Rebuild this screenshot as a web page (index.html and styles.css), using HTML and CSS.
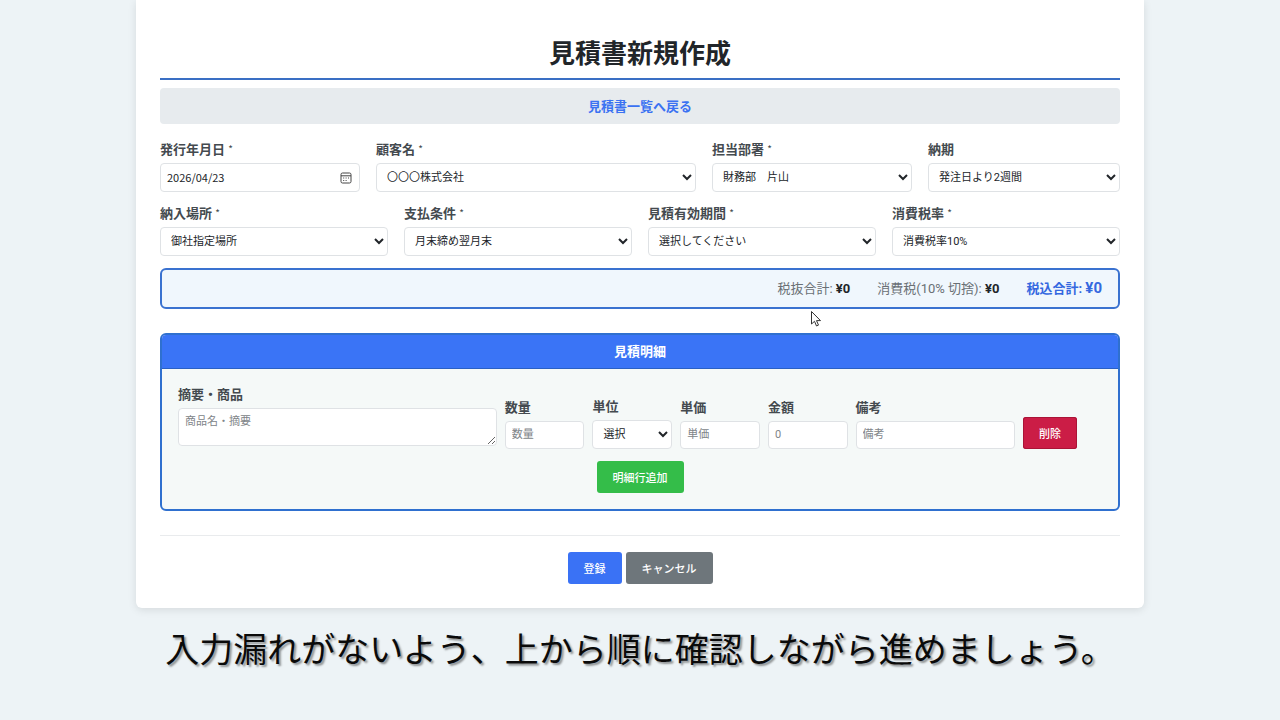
FILE: index.html
```html
<!DOCTYPE html>
<html lang="ja">
<head>
<meta charset="utf-8">
<title>見積書新規作成</title>
<link rel="stylesheet" href="styles.css">
</head>
<body>
<main class="card">
  <h1 class="title">見積書新規作成</h1>
  <a class="back" href="#">見積書一覧へ戻る</a>
  <form>
    <div class="grid grid-main">
      <div class="field">
        <label for="date">発行年月日 <span class="req">*</span></label>
        <div class="date">
          <input class="control" id="date" type="text" value="2026/04/23">
          <button class="picker" type="button" aria-label="カレンダー">
            <svg viewBox="0 0 12 12" width="12" height="12" fill="none" stroke="#444"><rect x="1" y="1" width="10" height="10" rx="1.5"/><path d="M1 3.8h10"/><path d="M3.2 6h1M5.6 6h1M8 6h1M3.2 8.5h1M5.6 8.5h1" stroke-width="1.2"/></svg>
          </button>
        </div>
      </div>
      <div class="field">
        <label for="customer">顧客名 <span class="req">*</span></label>
        <select class="control" id="customer"><option>〇〇〇株式会社</option></select>
      </div>
      <div class="field">
        <label for="dept">担当部署 <span class="req">*</span></label>
        <select class="control" id="dept"><option>財務部　片山</option></select>
      </div>
      <div class="field">
        <label for="due">納期</label>
        <select class="control" id="due"><option>発注日より2週間</option></select>
      </div>
    </div>
    <div class="grid grid-even">
      <div class="field">
        <label for="place">納入場所 <span class="req">*</span></label>
        <select class="control" id="place"><option>御社指定場所</option></select>
      </div>
      <div class="field">
        <label for="terms">支払条件 <span class="req">*</span></label>
        <select class="control" id="terms"><option>月末締め翌月末</option></select>
      </div>
      <div class="field">
        <label for="valid">見積有効期間 <span class="req">*</span></label>
        <select class="control" id="valid"><option>選択してください</option></select>
      </div>
      <div class="field">
        <label for="tax">消費税率 <span class="req">*</span></label>
        <select class="control" id="tax"><option>消費税率10%</option></select>
      </div>
    </div>
    <div class="summary">
      <span>税抜合計: <strong>¥0</strong></span>
      <span>消費税(10% 切捨): <strong>¥0</strong></span>
      <span class="total">税込合計: <strong>¥0</strong></span>
    </div>
    <section class="details">
      <h2 class="details-title">見積明細</h2>
      <div class="details-body">
        <div class="line">
          <div class="field">
            <label for="item">摘要・商品</label>
            <textarea class="control area" id="item" placeholder="商品名・摘要"></textarea>
          </div>
          <div class="field">
            <label for="qty">数量</label>
            <input class="control" id="qty" type="text" placeholder="数量">
          </div>
          <div class="field">
            <label for="unit">単位</label>
            <select class="control" id="unit"><option>選択</option></select>
          </div>
          <div class="field">
            <label for="price">単価</label>
            <input class="control" id="price" type="text" placeholder="単価">
          </div>
          <div class="field">
            <label for="amount">金額</label>
            <input class="control" id="amount" type="text" placeholder="0">
          </div>
          <div class="field">
            <label for="note">備考</label>
            <input class="control" id="note" type="text" placeholder="備考">
          </div>
          <button class="btn btn-delete" type="button">削除</button>
        </div>
        <button class="btn btn-add" type="button">明細行追加</button>
      </div>
    </section>
    <div class="actions">
      <button class="btn btn-save" type="submit">登録</button>
      <button class="btn btn-cancel" type="button">キャンセル</button>
    </div>
  </form>
</main>
<p class="caption">入力漏れがないよう、上から順に確認しながら進めましょう。</p>
<svg class="cursor" viewBox="0 0 12 18" width="12" height="18"><path d="M1.5 1.5v12.5l3-2.7 2 4.7 2-.9-2-4.5h4z" fill="#fff" stroke="#333"/></svg>
</body>
</html>
```
FILE: styles.css
```css
* {
  box-sizing: border-box;
}

body {
  margin: 0;
  min-height: 100vh;
  background: #edf3f6;
  color: #212529;
  font-family: Roboto, "Noto Sans CJK JP", sans-serif;
  font-size: 13px;
  line-height: 20px;
}

.card {
  width: calc(80% - 16px);
  min-width: 860px;
  margin: 0 auto;
  padding: 34px 24px 24px;
  background: #fff;
  border-radius: 0 0 6px 6px;
  box-shadow: 0 2px 8px rgba(0, 0, 0, 0.1);
}

.title {
  margin: 0 0 8px;
  padding-top: 1px;
  padding-bottom: 5px;
  border-bottom: 2px solid #3a6fc4;
  font-size: 26px;
  line-height: 38px;
  text-align: center;
}

.back {
  display: block;
  margin-bottom: 16px;
  padding: 9px 8px 7px;
  border-radius: 4px;
  background: #e7ebee;
  color: #3b72f2;
  font-weight: 700;
  text-align: center;
  text-decoration: none;
}

.grid {
  display: grid;
  gap: 16px;
  margin-bottom: 12px;
}

.grid-main {
  grid-template-columns: 25fr 40fr 25fr 24fr;
}

.grid-even {
  grid-template-columns: repeat(4, 1fr);
}

.field {
  display: flex;
  flex-direction: column;
  gap: 3px;
  min-width: 0;
}

label {
  height: 20px;
  color: #444a4f;
  font-weight: 700;
}

.req {
  font-family: "Noto Sans CJK JP", sans-serif;
  font-size: 10px;
  font-weight: 400;
  line-height: 1;
  vertical-align: 1px;
}

.control {
  width: 100%;
  height: 29px;
  margin: 0;
  padding: 3px 6px 4px;
  border: 1px solid #dfe2e5;
  border-radius: 4px;
  background: #fff;
  color: #212529;
  font-family: Roboto, "Noto Sans CJK JP", sans-serif;
  font-size: 11px;
}

.control::placeholder {
  color: #808488;
}

.date {
  position: relative;
}

.date .control {
  padding-bottom: 5px;
  font-family: "Noto Sans CJK JP", sans-serif;
}

.picker {
  position: absolute;
  top: 0;
  right: 8px;
  bottom: 0;
  display: flex;
  align-items: center;
  padding: 0;
  border: 0;
  background: none;
}

.summary {
  display: flex;
  justify-content: flex-end;
  gap: 27px;
  margin-bottom: 24px;
  padding: 9px 16px 8px;
  border: 2px solid #3a72d0;
  border-radius: 6px;
  background: #f0f7fd;
  color: #6a7075;
}

.summary strong {
  color: #212529;
}

.summary .total,
.summary .total strong {
  color: #3468e0;
  font-weight: 700;
}

.summary .total strong {
  font-size: 15px;
  line-height: 1;
}

.details {
  margin-bottom: 24px;
  overflow: hidden;
  border: 2px solid #2f70cf;
  border-radius: 6px;
  background: #f5f9f8;
}

.details-title {
  margin: 0;
  padding: 7px 8px 6px;
  border-bottom: 1px solid #2a60c4;
  background: #3a74f6;
  color: #fff;
  font-size: 13px;
  line-height: 20px;
  text-align: center;
}

.details-body {
  display: flex;
  flex-direction: column;
  gap: 12px;
  padding: 16px;
}

.line {
  display: grid;
  grid-template-columns: 4fr 1fr 1fr 1fr 1fr 2fr auto;
  align-items: end;
  gap: 8px;
  padding-right: 25px;
}

.line input.control {
  height: 28px;
}

.line .area {
  height: 38px;
  margin-bottom: 3px;
  resize: vertical;
}

.btn {
  height: 32px;
  padding: 0 16px;
  border: 0;
  border-radius: 3px;
  color: #fff;
  font-family: "Noto Sans CJK JP", sans-serif;
  font-size: 11px;
  font-weight: 500;
}

.btn-delete {
  box-shadow: inset 0 0 0 1px #aa1437;
  background: #cb1d46;
}

.btn-add {
  align-self: center;
  background: #34bd49;
}

.btn-save {
  background: #3a72f5;
}

.btn-cancel {
  background: #6e767b;
}

.actions {
  display: flex;
  justify-content: center;
  gap: 4px;
  padding-top: 16px;
  border-top: 1px solid #e9ebed;
}

.caption {
  margin: 15px 0 0;
  color: #0a0a0a;
  font-family: "Noto Sans CJK JP", sans-serif;
  font-size: 34px;
  line-height: 50px;
  text-align: center;
  text-shadow: 2px 2px 2px rgba(0, 0, 0, 0.4);
  white-space: nowrap;
}

.cursor {
  position: absolute;
  top: 310px;
  left: 810px;
}
```
